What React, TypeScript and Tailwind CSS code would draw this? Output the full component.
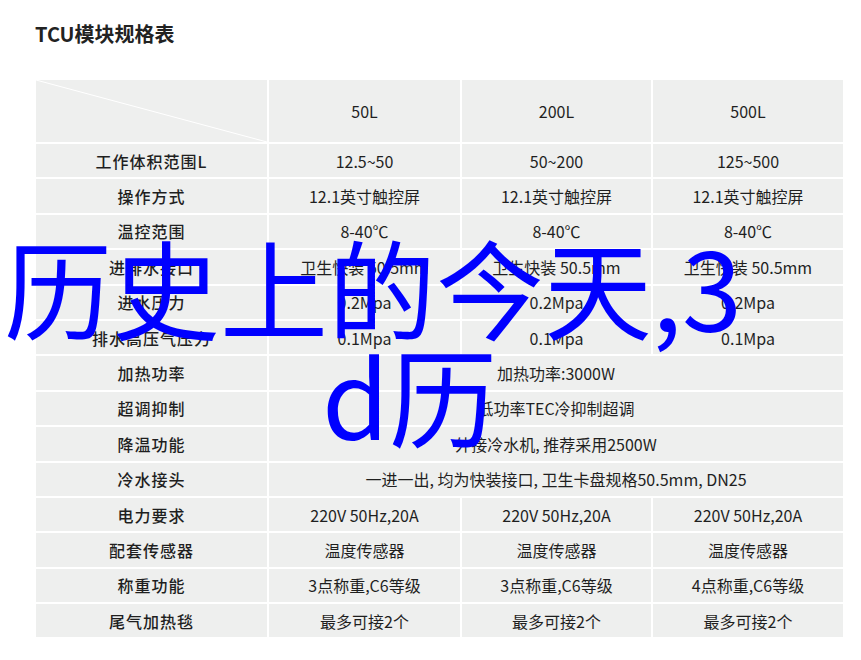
import React from "react";

type Row = { label: string; values: string[] };

const rows: Row[] = [
  { label: "工作体积范围L", values: ["12.5~50", "50~200", "125~500"] },
  { label: "操作方式", values: ["12.1英寸触控屏", "12.1英寸触控屏", "12.1英寸触控屏"] },
  { label: "温控范围", values: ["8-40℃", "8-40℃", "8-40℃"] },
  { label: "进排水接口", values: ["卫生快装 50.5mm", "卫生快装 50.5mm", "卫生快装 50.5mm"] },
  { label: "进水压力", values: ["0.2Mpa", "0.2Mpa", "0.2Mpa"] },
  { label: "排水高压气压力", values: ["0.1Mpa", "0.1Mpa", "0.1Mpa"] },
  { label: "加热功率", values: ["加热功率:3000W"] },
  { label: "超调抑制", values: ["低功率TEC冷抑制超调"] },
  { label: "降温功能", values: ["外接冷水机, 推荐采用2500W"] },
  { label: "冷水接头", values: ["一进一出, 均为快装接口, 卫生卡盘规格50.5mm, DN25"] },
  { label: "电力要求", values: ["220V 50Hz,20A", "220V 50Hz,20A", "220V 50Hz,20A"] },
  { label: "配套传感器", values: ["温度传感器", "温度传感器", "温度传感器"] },
  { label: "称重功能", values: ["3点称重,C6等级", "3点称重,C6等级", "4点称重,C6等级"] },
  { label: "尾气加热毯", values: ["最多可接2个", "最多可接2个", "最多可接2个"] },
];

const cell = "bg-[#eeefee] flex items-center justify-center text-[16px] text-[#1f1f1f] whitespace-nowrap";

const App: React.FC = () => {
  return (
    <div
      className="relative w-[861px] h-[660px] bg-white overflow-hidden"
      style={{ fontFamily: '"Noto Sans CJK SC", "Noto Sans", sans-serif' }}
    >
      {/* Title */}
      <h1 className="pl-[35px] pt-[20px] text-[20px] leading-[28px] font-bold text-[#222]">
        TCU模块规格表
      </h1>

      {/* Spec table */}
      <div className="ml-[36px] mt-[32px] w-[807px] bg-white grid grid-cols-[231px_191px_189px_190px] grid-rows-[62px_repeat(14,33.4px)] gap-[2px]">
        <div className="bg-[#eeefee] relative">
          <svg className="absolute inset-0 w-full h-full" viewBox="0 0 100 100" preserveAspectRatio="none">
            <line x1="0" y1="0" x2="100" y2="100" stroke="#ffffff" strokeWidth="1" vectorEffect="non-scaling-stroke" />
          </svg>
        </div>
        <div className={cell}>50L</div>
        <div className={cell}>200L</div>
        <div className={cell}>500L</div>

        {rows.map((r) => (
          <React.Fragment key={r.label}>
            <div className={cell + " font-medium tracking-[1px]"}>{r.label}</div>
            {r.values.length === 1 ? (
              <div className={cell + " col-span-3"}>{r.values[0]}</div>
            ) : (
              r.values.map((v, i) => (
                <div key={i} className={cell}>
                  {v}
                </div>
              ))
            )}
          </React.Fragment>
        ))}
      </div>

      {/* Overlay caption */}
      <div className="absolute left-0 top-[231px] text-[108px] leading-[108px] text-[#0000ff] whitespace-nowrap">
        <div className="pl-[4px]">历史上的今天,3</div>
        <div className="pl-[322px]">d历</div>
      </div>
    </div>
  );
};

export default App;
